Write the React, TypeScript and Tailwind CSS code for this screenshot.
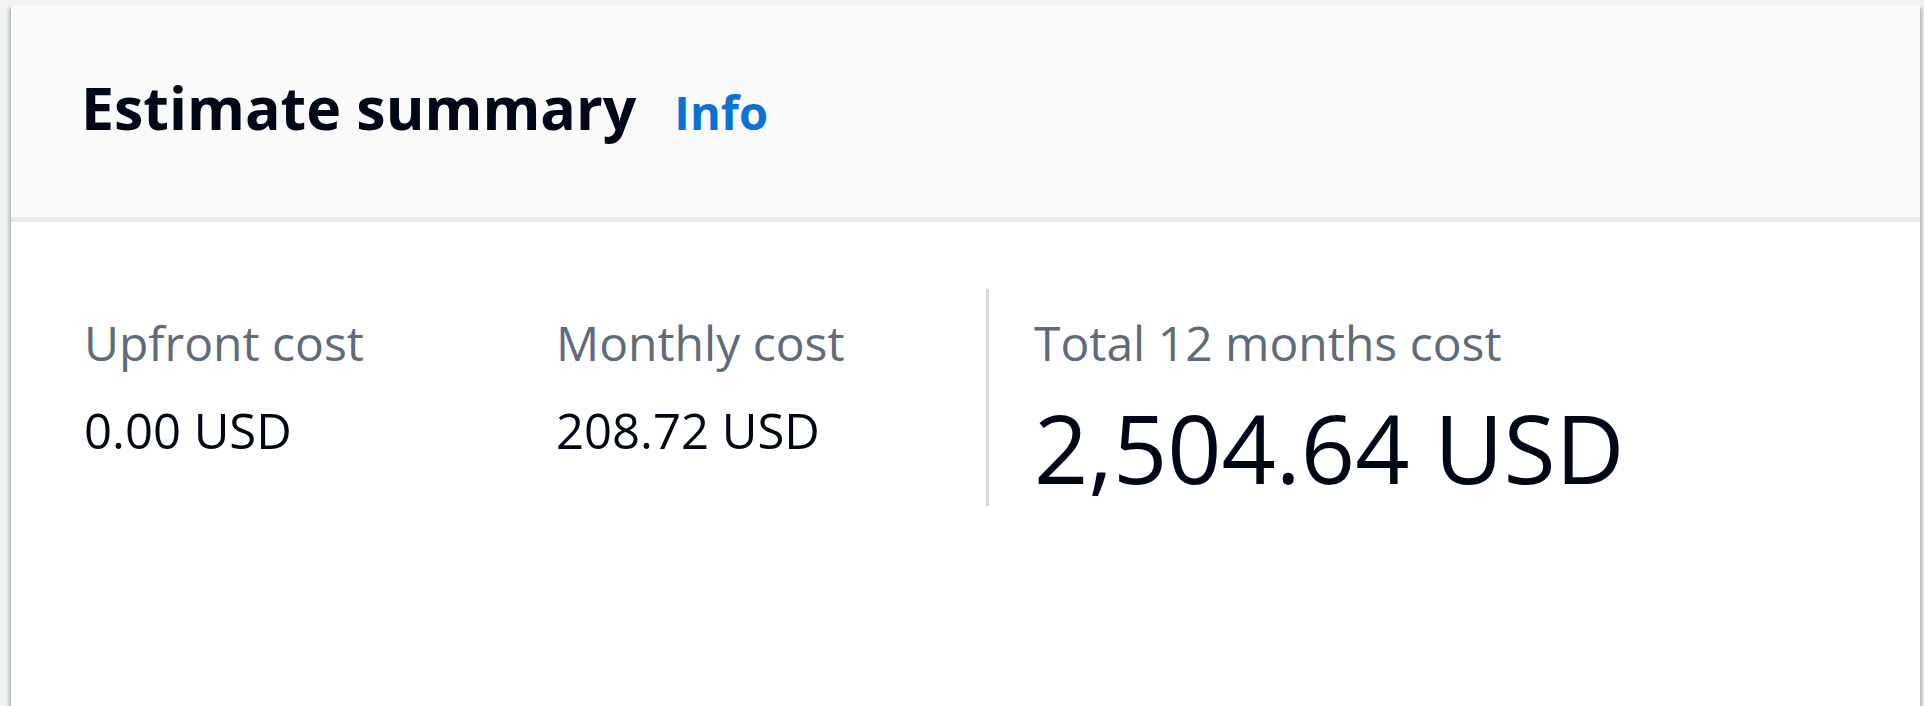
import React from 'react';

const font = { fontFamily: '"Open Sans", "Noto Sans", Arial, sans-serif' };

interface CostItemProps {
  label: string;
  value: string;
  large?: boolean;
}

function CostItem({ label, value, large = false }: CostItemProps) {
  return (
    <div className="flex flex-col">
      <div className="text-[48px] leading-[56px] text-[#5f6b7a]">{label}</div>
      {large ? (
        <div className="mt-[20px] text-[95px] leading-[112px] text-[#000716]">{value}</div>
      ) : (
        <div className="mt-[31px] text-[49px] leading-[56px] text-[#000716]">{value}</div>
      )}
    </div>
  );
}

export default function App() {
  return (
    <div
      style={font}
      className="h-[706px] w-full overflow-hidden bg-[#f2f3f3] pt-[5px] pl-[11px] pr-[4px]"
    >
      <div className="h-[720px] bg-white shadow-[0_3px_3px_0_rgba(0,28,36,0.3),3px_3px_3px_0_rgba(0,28,36,0.15),-3px_3px_3px_0_rgba(0,28,36,0.15)]">
        {/* Header */}
        <div className="h-[217px] bg-[#fafafa] border-b-[5px] border-[#e9ebed] pl-[70px] pt-[66px]">
          <div className="flex items-baseline gap-[38px]">
            <h2 className="text-[59px] leading-[72px] font-bold text-[#000716]">Estimate summary</h2>
            <a className="text-[47px] leading-[56px] font-bold text-[#0972d3]">Info</a>
          </div>
        </div>

        {/* Costs */}
        <div className="flex pl-[73px] pt-[67px]">
          <div className="w-[472px] pt-[26px]">
            <CostItem label="Upfront cost" value="0.00 USD" />
          </div>
          <div className="w-[430px] pt-[26px]">
            <CostItem label="Monthly cost" value="208.72 USD" />
          </div>
          <div className="border-l-[3px] border-[#d5dbdb] pl-[45px] pt-[26px] pb-[3px]">
            <CostItem label="Total 12 months cost" value="2,504.64 USD" large />
          </div>
        </div>
      </div>
    </div>
  );
}
